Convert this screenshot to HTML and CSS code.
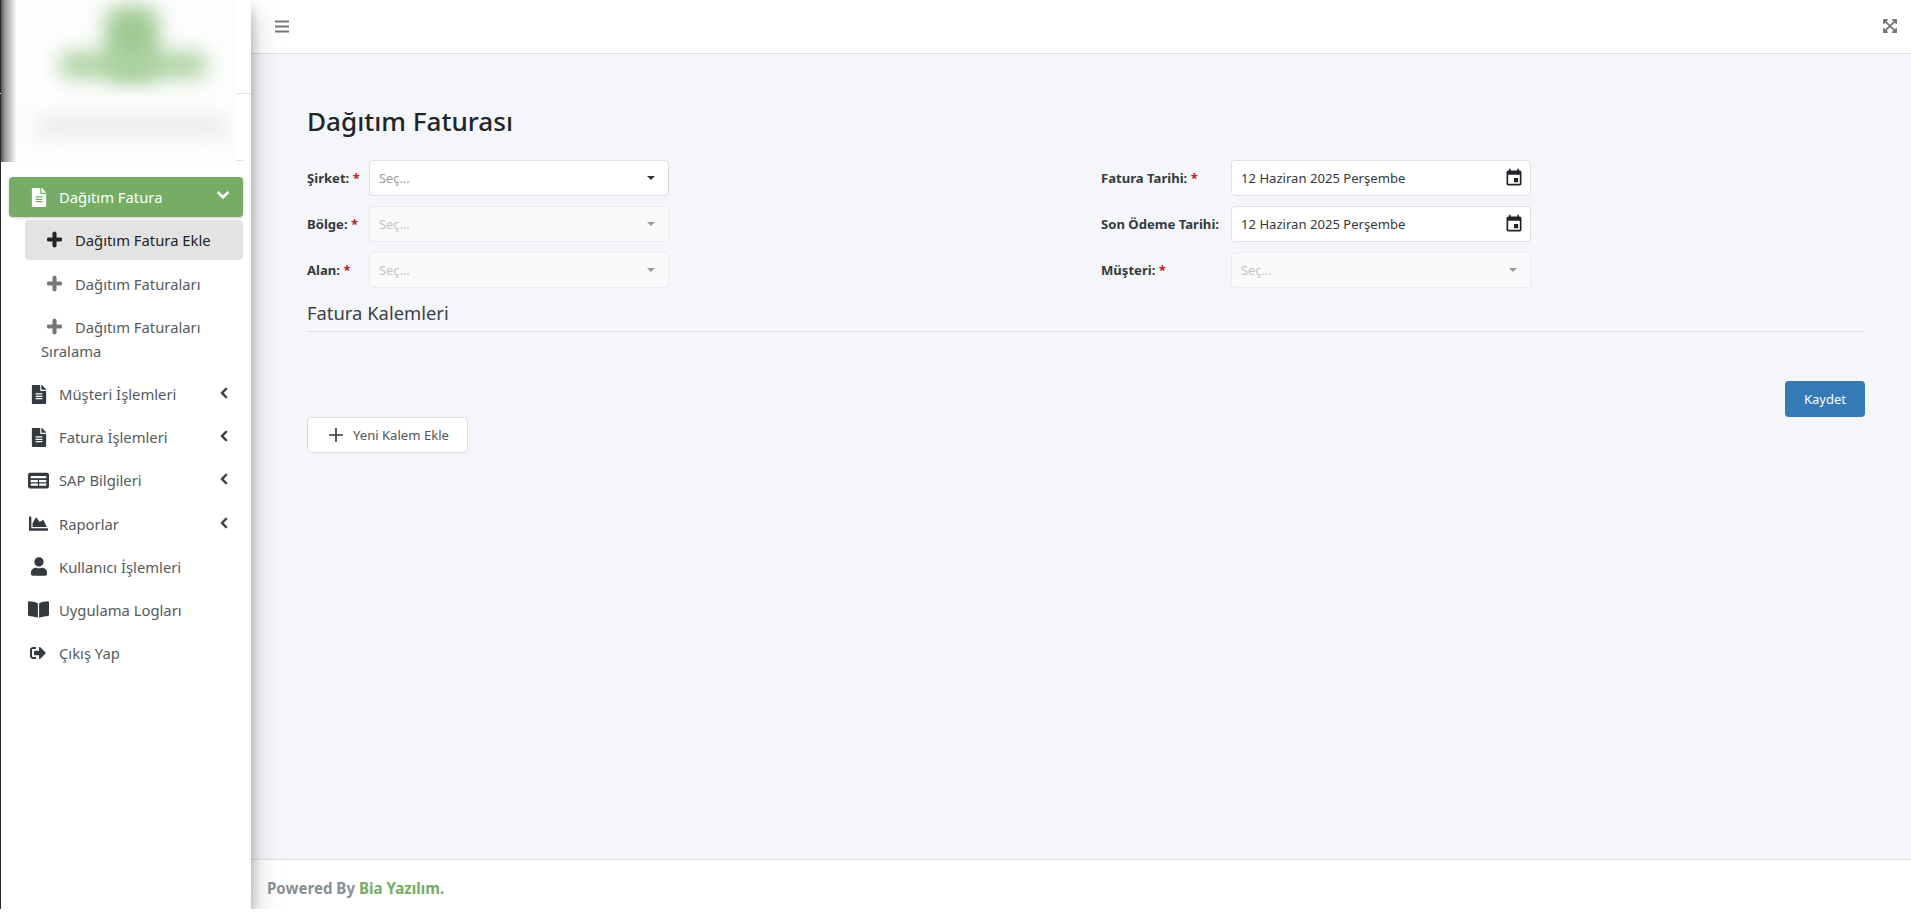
FILE: index.html
```html
<!DOCTYPE html>
<html lang="tr">
<head>
<meta charset="utf-8">
<title>Dağıtım Faturası</title>
<link rel="stylesheet" href="styles.css">
</head>
<body>
<svg class="defs" aria-hidden="true">
  <symbol id="i-file" viewBox="0 0 384 512"><path d="M224 136V0H24C10.7 0 0 10.7 0 24v464c0 13.3 10.7 24 24 24h336c13.3 0 24-10.7 24-24V160H248c-13.2 0-24-10.8-24-24zm64 236c0 6.6-5.4 12-12 12H108c-6.6 0-12-5.4-12-12v-8c0-6.6 5.4-12 12-12h168c6.6 0 12 5.4 12 12v8zm0-64c0 6.6-5.4 12-12 12H108c-6.6 0-12-5.4-12-12v-8c0-6.6 5.4-12 12-12h168c6.6 0 12 5.4 12 12v8zm0-72v8c0 6.6-5.4 12-12 12H108c-6.6 0-12-5.4-12-12v-8c0-6.6 5.4-12 12-12h168c6.6 0 12 5.4 12 12zm96-114.1v6.1H256V0h6.1c6.4 0 12.5 2.5 17 7l97.9 98c4.5 4.5 7 10.6 7 16.9z"/></symbol>
  <symbol id="i-plus" viewBox="0 0 448 512"><path d="M416 208H272V64c0-17.67-14.33-32-32-32h-32c-17.67 0-32 14.33-32 32v144H32c-17.67 0-32 14.33-32 32v32c0 17.67 14.33 32 32 32h144v144c0 17.67 14.33 32 32 32h32c17.67 0 32-14.33 32-32V304h144c17.67 0 32-14.33 32-32v-32c0-17.67-14.33-32-32-32z"/></symbol>
  <symbol id="i-left" viewBox="0 0 320 512"><path d="M34.52 239.03L228.87 44.69c9.37-9.37 24.57-9.37 33.94 0l22.67 22.67c9.36 9.36 9.38 24.53.04 33.9L131.49 256l154.02 154.75c9.34 9.38 9.32 24.54-.04 33.9l-22.67 22.67c-9.37 9.37-24.57 9.37-33.94 0L34.52 272.97c-9.37-9.37-9.37-24.57 0-33.94z"/></symbol>
  <symbol id="i-down" viewBox="0 0 448 512"><path d="M207.029 381.476L12.686 187.132c-9.373-9.373-9.373-24.569 0-33.941l22.667-22.667c9.357-9.357 24.522-9.375 33.901-.04L224 284.505l154.745-154.021c9.379-9.335 24.544-9.317 33.901.04l22.667 22.667c9.373 9.373 9.373 24.569 0 33.941L240.971 381.476c-9.373 9.372-24.569 9.372-33.942 0z"/></symbol>
  <symbol id="i-table" viewBox="0 0 576 512"><path fill-rule="evenodd" d="M56 40h464c31 0 56 25 56 56v320c0 31-25 56-56 56H56c-31 0-56-25-56-56V96c0-31 25-56 56-56zM92 130c-11 0-20 9-20 20v24c0 11 9 20 20 20h392c11 0 20-9 20-20v-24c0-11-9-20-20-20H92zm0 112c-11 0-20 9-20 20v30c0 8 6 14 14 14h172c8 0 14-6 14-14v-36c0-8-6-14-14-14H92zm226 0c-8 0-14 6-14 14v36c0 8 6 14 14 14h172c8 0 14-6 14-14v-36c0-8-6-14-14-14H318zM86 338c-8 0-14 6-14 14v30c0 11 9 20 20 20h166c8 0 14-6 14-14v-36c0-8-6-14-14-14H86zm232 0c-8 0-14 6-14 14v36c0 8 6 14 14 14h166c11 0 20-9 20-20v-30c0-8-6-14-14-14H318z"/></symbol>
  <symbol id="i-chart" viewBox="0 0 512 512"><path d="M500 384c6.6 0 12 5.4 12 12v40c0 6.6-5.4 12-12 12H12c-6.6 0-12-5.4-12-12V76c0-6.6 5.4-12 12-12h40c6.6 0 12 5.4 12 12v308h436zM372.7 159.5L288 216l-85.3-113.7c-5.1-6.8-15.5-6.3-19.9 1L96 248v104h384l-89.9-187.8c-3.2-6.5-11.4-8.7-17.4-4.7z"/></symbol>
  <symbol id="i-user" viewBox="0 0 448 512"><path d="M224 256c70.7 0 128-57.3 128-128S294.7 0 224 0 96 57.3 96 128s57.3 128 128 128zm89.6 32h-16.7c-22.2 10.2-46.9 16-72.9 16s-50.6-5.8-72.9-16h-16.7C60.2 288 0 348.2 0 422.4V464c0 26.5 21.5 48 48 48h352c26.5 0 48-21.5 48-48v-41.6c0-74.2-60.2-134.4-134.4-134.4z"/></symbol>
  <symbol id="i-book" viewBox="0 0 576 512"><path d="M542.22 32.05c-54.8 3.11-163.72 14.43-230.96 55.59-4.64 2.84-7.27 7.89-7.27 13.17v363.87c0 11.55 12.63 18.85 23.28 13.49 69.18-34.82 169.23-44.32 218.7-46.92 16.89-.89 30.02-14.43 30.02-30.66V62.75c.01-17.71-15.35-31.74-33.77-30.7zM264.73 87.64C197.5 46.48 88.58 35.17 33.78 32.05 15.36 31.01 0 45.04 0 62.75V400.6c0 16.24 13.13 29.78 30.02 30.66 49.49 2.6 149.59 12.11 218.77 46.95 10.62 5.35 23.21-1.94 23.21-13.46V100.63c0-5.29-2.62-10.14-7.27-12.99z"/></symbol>
  <symbol id="i-out" viewBox="0 0 512 512"><path d="M497 273L329 441c-15 15-41 4.5-41-17v-96H152c-13.3 0-24-10.7-24-24v-96c0-13.3 10.7-24 24-24h136V88c0-21.4 25.9-32 41-17l168 168c9.3 9.4 9.3 24.6 0 34zM192 436v-40c0-6.6-5.4-12-12-12H96c-17.7 0-32-14.3-32-32V160c0-17.7 14.3-32 32-32h84c6.6 0 12-5.4 12-12V76c0-6.6-5.4-12-12-12H96c-53 0-96 43-96 96v192c0 53 43 96 96 96h84c6.6 0 12-5.4 12-12z"/></symbol>
  <symbol id="i-cal" viewBox="0 0 24 24"><path d="M17 12h-5v5h5v-5zM16 1v2H8V1H6v2H5c-1.11 0-1.99.9-1.99 2L3 19c0 1.1.89 2 2 2h14c1.1 0 2-.9 2-2V5c0-1.1-.9-2-2-2h-1V1h-2zm3 18H5V8h14v11z"/></symbol>
  <symbol id="i-expand" viewBox="0 0 448 512"><path d="M448 344v112a23.94 23.94 0 0 1-24 24H312c-21.39 0-32.09-25.9-17-41l36.2-36.2L224 295.6 116.77 402.9 153 439c15.09 15.1 4.39 41-17 41H24a23.94 23.94 0 0 1-24-24V344c0-21.4 25.89-32.1 41-17l36.19 36.2L184.46 256 77.18 148.7 41 185c-15.1 15.1-41 4.4-41-17V56a23.94 23.94 0 0 1 24-24h112c21.39 0 32.09 25.9 17 41l-36.2 36.2L224 216.4l107.23-107.3L295 73c-15.09-15.1-4.39-41 17-41h112a23.94 23.94 0 0 1 24 24v112c0 21.4-25.89 32.1-41 17l-36.19-36.2L263.54 256l107.28 107.3L407 327.1c15.1-15.2 41-4.5 41 16.9z"/></symbol>
  <symbol id="i-bars" viewBox="0 0 14 12"><path d="M0 0h14v2H0zM0 5h14v2H0zM0 10h14v2H0z"/></symbol>
</svg>
<div class="app">
  <aside class="sidebar">
    <div class="brand"></div>
    <div class="user-panel"></div>
    <div class="logo">
      <div class="logo-shade"></div>
      <div class="blob blob-v"></div>
      <div class="blob blob-h"></div>
      <div class="blob blob-t"></div>
    </div>
    <nav class="nav">
      <a class="link active"><svg class="ico ico-file"><use href="#i-file"/></svg><span class="label">Dağıtım Fatura</span><svg class="chev chev-down"><use href="#i-down"/></svg></a>
      <div class="sub">
        <a class="link sub-link sub-active"><svg class="ico-plus"><use href="#i-plus"/></svg>Dağıtım Fatura Ekle</a>
        <a class="link sub-link"><svg class="ico-plus"><use href="#i-plus"/></svg>Dağıtım Faturaları</a>
        <a class="link sub-link"><svg class="ico-plus"><use href="#i-plus"/></svg>Dağıtım Faturaları Sıralama</a>
      </div>
      <a class="link"><svg class="ico ico-file"><use href="#i-file"/></svg><span class="label">Müşteri İşlemleri</span><svg class="chev"><use href="#i-left"/></svg></a>
      <a class="link"><svg class="ico ico-file"><use href="#i-file"/></svg><span class="label">Fatura İşlemleri</span><svg class="chev"><use href="#i-left"/></svg></a>
      <a class="link"><svg class="ico ico-wide"><use href="#i-table"/></svg><span class="label">SAP Bilgileri</span><svg class="chev"><use href="#i-left"/></svg></a>
      <a class="link"><svg class="ico ico-chart"><use href="#i-chart"/></svg><span class="label">Raporlar</span><svg class="chev"><use href="#i-left"/></svg></a>
      <a class="link"><svg class="ico ico-file"><use href="#i-user"/></svg><span class="label">Kullanıcı İşlemleri</span></a>
      <a class="link"><svg class="ico ico-wide"><use href="#i-book"/></svg><span class="label">Uygulama Logları</span></a>
      <a class="link"><svg class="ico ico-out"><use href="#i-out"/></svg><span class="label">Çıkış Yap</span></a>
    </nav>
  </aside>
  <div class="main">
    <header class="topbar">
      <svg class="bars"><use href="#i-bars"/></svg>
      <svg class="expand"><use href="#i-expand"/></svg>
    </header>
    <main class="content">
      <h1 class="title">Dağıtım Faturası</h1>
      <div class="form">
        <div class="col">
          <div class="row"><label class="lbl lbl-left">Şirket: <span class="req">*</span></label><div class="select">Seç...<i class="caret"></i></div></div>
          <div class="row"><label class="lbl lbl-left">Bölge: <span class="req">*</span></label><div class="select disabled">Seç...<i class="caret"></i></div></div>
          <div class="row"><label class="lbl lbl-left">Alan: <span class="req">*</span></label><div class="select disabled">Seç...<i class="caret"></i></div></div>
        </div>
        <div class="col">
          <div class="row"><label class="lbl lbl-right">Fatura Tarihi: <span class="req">*</span></label><div class="select date">12 Haziran 2025 Perşembe<svg class="cal"><use href="#i-cal"/></svg></div></div>
          <div class="row"><label class="lbl lbl-right">Son Ödeme Tarihi:</label><div class="select date">12 Haziran 2025 Perşembe<svg class="cal"><use href="#i-cal"/></svg></div></div>
          <div class="row"><label class="lbl lbl-right">Müşteri: <span class="req">*</span></label><div class="select disabled">Seç...<i class="caret"></i></div></div>
        </div>
      </div>
      <h2 class="section">Fatura Kalemleri</h2>
      <div class="actions"><button class="btn-save">Kaydet</button></div>
      <button class="btn-add"><svg class="add-plus" viewBox="0 0 14 14"><path d="M6.2 0h1.6v6.2H14v1.6H7.8V14H6.2V7.8H0V6.2h6.2z"/></svg>Yeni Kalem Ekle</button>
    </main>
    <footer class="footer"><strong>Powered By <span class="brand-name">Bia Yazılım</span>.</strong></footer>
  </div>
</div>
</body>
</html>
```
FILE: styles.css
```css
* { box-sizing: border-box; }
html, body { margin: 0; padding: 0; background: #fff; }
body { font-family: "Noto Sans", sans-serif; font-size: 14px; color: #212529; overflow: hidden; }
.defs { display: none; }
.app { display: flex; height: 909px; overflow: hidden; }

.sidebar { position: relative; z-index: 2; width: 251px; flex: none; background: #fff; border-left: 1px solid #2a2622; box-shadow: 0 14px 28px rgba(0,0,0,.25), 0 10px 10px rgba(0,0,0,.22); }
.brand { height: 94px; border-bottom: 1px solid #dee2e6; margin-left: -1px; }
.user-panel { height: 67px; margin-right: 8px; border-bottom: 1px solid #dee2e6; }
.logo { position: absolute; left: 0; top: 0; width: 235px; height: 162px; background: #fdfdfd; overflow: hidden; }
.logo-shade { position: absolute; left: 0; top: 0; bottom: 0; width: 16px; background: linear-gradient(90deg, #555 0, #9a9a9a 25%, #ececec 85%, #fdfdfd 100%); }
.blob { position: absolute; filter: blur(10px); }
.blob-v { left: 104px; top: 6px; width: 54px; height: 74px; background: #a0ca94; border-radius: 16px; }
.blob-h { left: 58px; top: 52px; width: 148px; height: 26px; background: #acd2a1; border-radius: 12px; }
.blob-t { left: 36px; top: 119px; width: 190px; height: 16px; background: #e6e6e6; }

.nav { display: flex; flex-direction: column; gap: 3.2px; margin: 16.3px 8px 0; }
.sub { display: flex; flex-direction: column; gap: 3.2px; padding-left: 16px; }
.link { position: relative; display: flex; align-items: center; height: 40px; padding: 0 16px 0 21px; border-radius: 4px; color: #565b60; font-size: 14.8px; line-height: 24px; }
.link.active { background: #74ad63; color: #fff; box-shadow: 0 1px 3px rgba(0,0,0,.2); }
.ico { fill: #343a40; flex: none; }
.active .ico { fill: #fff; }
.ico-file { width: 16px; height: 19px; margin-left: 1px; }
.ico-wide { width: 21px; height: 19px; margin-left: -2px; margin-right: -3px; }
.ico-chart { width: 19px; height: 19px; margin-left: -1px; }
.ico-out { width: 16px; height: 16px; margin-left: 0; }
.label { position: absolute; left: 50px; }
.chev { position: absolute; right: 15px; top: 13px; width: 8px; height: 12px; fill: #343a40; stroke: #343a40; stroke-width: 30px; }
.chev-down { width: 12px; height: 14px; right: 14px; top: 11px; fill: #fff; stroke: #fff; }
.sub-link { display: block; height: auto; padding: 8px 16px; }
.sub-active { background: #e3e3e3; color: #212529; }
.ico-plus { display: inline-block; width: 15px; height: 17px; margin: 0 13px 0 6px; vertical-align: -2px; fill: #777; stroke: #777; stroke-width: 25px; }
.sub-active .ico-plus { fill: #212529; stroke: #212529; }

.main { flex: 1; display: flex; flex-direction: column; min-width: 0; }
.topbar { display: flex; align-items: center; justify-content: space-between; height: 54px; flex: none; padding: 0 14px 1px 24px; background: #fff; border-bottom: 1px solid #dee2e6; }
.bars { width: 14px; height: 13px; fill: #777; }
.expand { width: 14px; height: 16px; fill: #777; }
.content { flex: 1; padding: 50px 46px 0 56px; background: #f4f6f9; }
.title { margin: 0 0 22px; font-size: 26.1px; line-height: 34px; font-weight: 500; color: #212529; }
.form { display: flex; }
.col { display: flex; flex-direction: column; gap: 10px; }
.col:first-child { width: 794px; }
.row { display: flex; align-items: center; }
.lbl { flex: none; font-size: 13.1px; font-weight: 700; color: #343a40; white-space: nowrap; }
.lbl-left { width: 62px; }
.lbl-right { width: 130px; }
.req { color: #b3262f; }
.select { position: relative; width: 300px; height: 36px; padding: 0 9px; border: 1px solid #dcdfe3; border-radius: 4px; background: #fff; font-size: 12.8px; line-height: 35px; color: #9a9a9a; }
.select.disabled { background: #f9fafc; border-color: #e9ebef; color: #c4c4c4; }
.select.date { padding-left: 9px; font-size: 13.1px; color: #343a40; }
.caret { position: absolute; right: 13px; top: 15px; width: 0; height: 0; border: 4px solid transparent; border-top: 4.5px solid #333; border-bottom: 0; }
.disabled .caret { border-top-color: #999; }
.cal { position: absolute; right: 6.5px; top: 7px; width: 20px; height: 20px; fill: #212529; }
.section { margin: 13px 0 0; padding-bottom: 6px; font-size: 18.4px; line-height: 24px; font-weight: 400; color: #3d4246; border-bottom: 1px solid #dee2e6; }
.actions { display: flex; justify-content: flex-end; margin-top: 49px; }
.btn-save { width: 80px; height: 36px; border: 0; border-radius: 4px; background: #337ab7; color: #fff; font: 13px "Noto Sans", sans-serif; }
.btn-add { display: flex; align-items: center; width: 161px; height: 36px; padding: 0 0 0 21px; border: 1px solid #dcdfe3; border-radius: 4px; background: #fff; color: #555; font: 13.1px "Noto Sans", sans-serif; }
.add-plus { width: 14px; height: 14px; margin-right: 10px; fill: #343a40; }
.footer { height: 50px; flex: none; padding: 16px 0 0 16px; background: #fff; border-top: 1px solid #dee2e6; color: #869099; font-size: 15.1px; line-height: 24px; }
.footer strong { font-weight: 700; }
.brand-name { color: #74ad63; }
```
